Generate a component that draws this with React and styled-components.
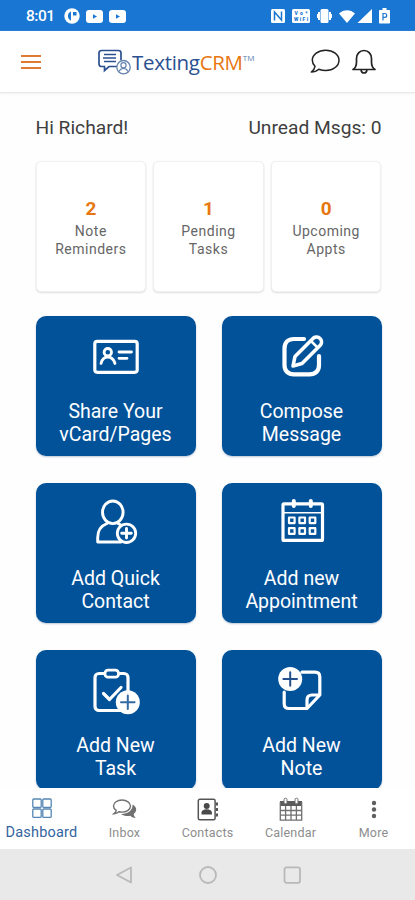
import styled, { createGlobalStyle } from "styled-components";

const COLORS = {
  status: "#1976d2",
  tile: "#02529a",
  orange: "#e8760f",
  navy: "#2b5090",
  grey: "#8d8d8d",
  dark: "#3f3f3f",
};

const GlobalStyle = createGlobalStyle`
  * {
    box-sizing: border-box;
  }
  body {
    margin: 0;
    background: #fff;
    font-family: Roboto, "Liberation Sans", sans-serif;
  }
  svg {
    display: block;
    flex-shrink: 0;
    overflow: visible;
  }
`;

const Screen = styled.div`
  width: 415px;
  height: 900px;
  display: flex;
  flex-direction: column;
  overflow: hidden;
  background: #fefefe;
`;

const StatusBar = styled.div`
  height: 31px;
  flex-shrink: 0;
  display: flex;
  align-items: center;
  justify-content: space-between;
  padding: 1px 25px 0 26px;
  background: ${COLORS.status};
  color: #fff;
`;

const StatusGroup = styled.div`
  display: flex;
  align-items: center;
  gap: ${(props) => props.$gap}px;
`;

const Time = styled.span`
  font-size: 15.5px;
  font-weight: 500;
  width: 31px;
  letter-spacing: -0.5px;
  margin-right: 1px;
`;

const Header = styled.header`
  height: 62px;
  flex-shrink: 0;
  display: flex;
  align-items: center;
  padding: 0 39px 0 21px;
  background: #fff;
  border-bottom: 1px solid #e9e9e9;
  box-shadow: 0 1px 2px #f1f1f1;
`;

const Menu = styled.div`
  width: 20px;
  display: flex;
  flex-direction: column;
  gap: 4px;
  span {
    height: 2px;
    background: #df7a35;
  }
`;

const Brand = styled.div`
  display: flex;
  align-items: center;
  flex: 1;
  margin-left: 56px;
`;

const BrandName = styled.div`
  font-family: "Open Sans", "Noto Sans", sans-serif;
  font-size: 20.5px;
  line-height: 28px;
  letter-spacing: -0.3px;
  white-space: nowrap;
  color: ${COLORS.navy};
  b {
    font-weight: 400;
    color: ${COLORS.orange};
  }
  sup {
    font-size: 8px;
    line-height: 0;
    vertical-align: 9px;
    letter-spacing: 0;
    color: #5f7fae;
  }
`;

const HeaderIcons = styled.div`
  display: flex;
  align-items: center;
  gap: 12px;
`;

const Content = styled.main`
  flex: 1;
  min-height: 0;
  overflow: hidden;
  padding: 23px 33.5px 0 35.5px;
`;

const Greeting = styled.div`
  display: flex;
  justify-content: space-between;
  font-size: 19.2px;
  line-height: 24px;
  color: ${COLORS.dark};
`;

const Stats = styled.div`
  display: grid;
  grid-template-columns: repeat(3, 1fr);
  gap: 7px;
  margin-top: 21px;
`;

const StatCard = styled.div`
  height: 131px;
  padding-top: 36px;
  text-align: center;
  background: #fff;
  border: 1px solid #f0f0f0;
  border-radius: 5px;
  box-shadow: 0 1px 2px #dedede;
`;

const StatNumber = styled.div`
  font-size: 19px;
  font-weight: 700;
  line-height: 22px;
  color: ${COLORS.orange};
`;

const StatLabel = styled.div`
  margin-top: 2px;
  font-size: 14px;
  line-height: 18px;
  letter-spacing: 0.5px;
  white-space: pre-line;
  color: #666;
`;

const Tiles = styled.div`
  display: grid;
  grid-template-columns: 160px 160px;
  justify-content: space-between;
  row-gap: 27px;
  margin-top: 24px;
`;

const Tile = styled.div`
  height: 140px;
  display: flex;
  flex-direction: column;
  align-items: center;
  padding-top: 16px;
  border-radius: 10px;
  background: ${COLORS.tile};
  color: #fff;
  box-shadow: 0 1px 2px #b9c6d6;
`;

const TileLabel = styled.div`
  margin-top: 18px;
  font-size: 19.5px;
  line-height: 23px;
  text-align: center;
  white-space: pre-line;
`;

const TabBar = styled.nav`
  height: 61px;
  flex-shrink: 0;
  display: grid;
  grid-template-columns: repeat(5, 83px);
  background: #fff;
`;

const Tab = styled.div`
  display: flex;
  flex-direction: column;
  align-items: center;
  padding-top: 9px;
  color: ${(props) => (props.$active ? "#34649f" : COLORS.grey)};
  font-size: ${(props) => (props.$active ? 14.5 : 12.5)}px;
  line-height: 18px;
  letter-spacing: 0.2px;
  svg {
    margin-bottom: 2px;
  }
`;

const SystemNav = styled.div`
  height: 51px;
  flex-shrink: 0;
  display: flex;
  align-items: center;
  justify-content: center;
  gap: 64px;
  background: #e9e9e9;
`;

const TileSvg = ({ children, width = 3.2 }) => (
  <svg
    width="50"
    height="50"
    viewBox="0 0 50 50"
    fill="none"
    stroke="#fff"
    strokeWidth={width}
    strokeLinecap="round"
    strokeLinejoin="round"
  >
    {children}
  </svg>
);

const VCardIcon = () => (
  <TileSvg>
    <rect x="3.8" y="9.3" width="42.4" height="31" rx="2.5" />
    <circle cx="16.8" cy="20.2" r="3.7" strokeWidth="2.8" />
    <path d="M10 31.5c1-4 3.5-6.5 6.8-6.5s6 2.5 7.2 6.5" strokeWidth="2.8" />
    <path d="M28 20h12.5M28 26.3h8" strokeWidth="2.8" />
  </TileSvg>
);

const ComposeIcon = () => (
  <TileSvg width={4.2}>
    <path d="M27 7H17C11 7 7.5 10.5 7.5 16.5V33c0 6 3.5 9.3 9.5 9.3h15.5c6 0 9.500-3.300 9.500-9.300V24" />
    <path
      d="M16 34l2-9.500L36.500 6a5 5 0 0 1 7 7L25 31.500z"
      fill={COLORS.tile}
      strokeWidth="3.600"
    />
    <path d="M34 9l6.500 6.500" strokeWidth="2.500" />
  </TileSvg>
);

const ContactIcon = () => (
  <TileSvg width={2.9}>
    <ellipse cx="21.8" cy="13.3" rx="10.3" ry="11.3" />
    <path d="M16 24.5C9.500 27 6.700 32 6.700 38.500V43H30M27 24.500l3 1.500" />
    <circle cx="35.5" cy="34.3" r="9.2" fill={COLORS.tile} />
    <path d="M35.500 29.500v9.600M30.700 34.300h9.600" />
  </TileSvg>
);

const AppointmentIcon = () => (
  <TileSvg>
    <rect x="6" y="4.8" width="39.5" height="36.6" rx="1" />
    <path d="M6 13.800h39.500" strokeWidth="1.600" />
    <path d="M16.800 2v5M33.800 2v5" strokeWidth="4" />
    {[21.3, 32].map((y) =>
      [14.8, 25.2, 35.5].map((x) => (
        <rect key={`${x}-${y}`} x={x - 2.8} y={y - 2.8} width="5.6" height="5.6" strokeWidth="2.2" />
      ))
    )}
  </TileSvg>
);

const TaskIcon = () => (
  <TileSvg>
    <rect x="4" y="7.5" width="33" height="37" rx="4" />
    <rect x="14" y="4.2" width="13.5" height="7" rx="3" fill={COLORS.tile} strokeWidth="2.8" />
    <path d="M12.500 27.500l6 6L30 21.500" />
    <circle cx="36.8" cy="36.3" r="12" fill="#fff" stroke="none" />
    <path d="M36.800 29.500v13.600M30 36.300h13.600" stroke="#356aa3" strokeWidth="2" />
  </TileSvg>
);

const NoteIcon = () => (
  <TileSvg>
    <path d="M25 6.200h13c3 0 4.800 1.800 4.800 4.800V29L30 42.500H12c-3 0-4.800-1.800-4.800-4.800V26" />
    <path d="M30 41v-7c0-3.500 1.500-5 5-5h6.500" />
    <circle cx="13.2" cy="13" r="12" fill="#fff" stroke="none" />
    <path d="M13.200 6.200v13.600M6.400 13h13.600" stroke="#234f8c" strokeWidth="2" />
  </TileSvg>
);

const LogoIcon = () => (
  <svg width="35" height="26" viewBox="0 0 35 26" fill="none" stroke={COLORS.navy} strokeWidth="1.7">
    <path d="M23 17.500H12L7.500 21.500v-4H4.500c-1.500 0-2.500-1-2.500-2.500V4c0-1.500 1-2.500 2.500-2.500h17C23 1.500 24 2.500 24 4v7" />
    <path d="M7 5.500h12M6 9h13M7 12.500h12" />
    <circle cx="26.5" cy="18.2" r="6.7" fill="#fff" stroke="#6483ae" strokeWidth="1.3" />
    <circle cx="26.5" cy="16.2" r="2.6" stroke="#6483ae" strokeWidth="1.2" />
    <path d="M22 22.500c.8-2 2.500-3 4.500-3s3.700 1 4.500 3" stroke="#6483ae" strokeWidth="1.2" />
  </svg>
);

const ChatIcon = () => (
  <svg width="30" height="25" viewBox="0 0 30 25" fill="none" stroke="#222" strokeWidth="1.5" strokeLinejoin="round">
    <path d="M15.700 1.200C8.300 1.200 2.300 5.600 2.300 11c0 2.500 1 4.600 2.700 6.300-.3 2.200-1.700 4.200-3.700 5.700 3 0 5.600-1 7.500-2.800 2.100.8 4.400 1.300 6.900 1.300 7.500 0 13.300-4.600 13.300-10.300S23.200 1.200 15.700 1.200z" />
  </svg>
);

const BellIcon = () => (
  <svg width="24" height="25" viewBox="0 0 24 25" fill="none" stroke="#222" strokeWidth="1.7" strokeLinejoin="round">
    <path d="M1 20.500c2.500-1.500 3.500-4 3.500-7.500V9.500c0-4.500 3-8 7.500-8s7.500 3.500 7.500 8V13c0 3.500 1 6 3.500 7.500z" />
    <path d="M9 21c.3 1.800 1.300 3 3 3s2.700-1.200 3-3" />
  </svg>
);

const YoutubeIcon = () => (
  <svg width="17" height="13" viewBox="0 0 17 13">
    <rect width="17" height="13" rx="3" fill="#fff" />
    <path d="M7 4.200v4.600l4-2.300z" fill={COLORS.status} />
  </svg>
);

const GridIcon = () => (
  <svg width="20" height="25" viewBox="0 0 20 25" fill="none" stroke="#5686b4" strokeWidth="1.3">
    <rect x=".8" y="2" width="8.4" height="8.4" rx="1" />
    <rect x="10.8" y="2" width="8.4" height="8.4" rx="1" />
    <rect x=".8" y="12" width="8.4" height="8.4" rx="1" />
    <rect x="10.8" y="12" width="8.4" height="8.4" rx="1" />
  </svg>
);

const InboxIcon = () => (
  <svg width="25" height="25" viewBox="0 0 25 25">
    <path
      d="M20.500 7.500c2.300 1.200 3.700 3 3.700 5 0 1.800-1 3.300-2.500 4.500.2 1.700 1 3 2.300 4-2.300 0-4.300-.8-5.700-2.200-3.500.6-6.800 0-9.300-1.800 6.500.2 12-3.500 11.500-9.500z"
      fill="#707070"
    />
    <path
      d="M10 3C5.300 3 1.500 5.700 1.500 9c0 1.800 1 3.300 2.700 4.400-.2 1.300-1 2.500-2.200 3.300 2 0 3.600-.6 4.900-1.900 1 .2 2 .3 3.100.3 4.700 0 8.500-2.700 8.500-6S14.700 3 10 3z"
      fill="#fff"
      stroke="#707070"
      strokeWidth="1.4"
    />
  </svg>
);

const ContactsIcon = () => (
  <svg width="22" height="25" viewBox="0 0 22 25">
    <rect x="1.3" y="2.3" width="16.8" height="20.5" rx="1.5" fill="none" stroke="#555" strokeWidth="1.5" />
    <circle cx="9.7" cy="9" r="3" fill="#4a4a4a" />
    <path d="M4.500 17.500v-2c0-2 2-3.300 5.200-3.300s5.200 1.300 5.200 3.300v2z" fill="#4a4a4a" />
    <path d="M20 5.500v3M20 11v3M20 16.500v3" stroke="#555" strokeWidth="2" />
  </svg>
);

const CalendarIcon = () => (
  <svg width="24" height="25" viewBox="0 0 24 25" fill="none" stroke="#707070">
    <path d="M1 4h22v5H1z" fill="#5b5b5b" stroke="none" />
    <path d="M1.300 5v18.200h21.400V5M6.600 9v14M12 9v14M17.400 9v14M1.300 13.500h21.400M1.300 18.200h21.400" strokeWidth="1.3" />
    <rect x="5" y="1.2" width="3" height="5.5" rx="1.5" fill="#fff" />
    <rect x="16" y="1.2" width="3" height="5.5" rx="1.5" fill="#fff" />
  </svg>
);

const MoreIcon = () => (
  <svg width="6" height="25" viewBox="0 0 6 25" fill="#5e5e5e">
    <circle cx="3" cy="6" r="2.2" />
    <circle cx="3" cy="12.5" r="2.2" />
    <circle cx="3" cy="19" r="2.2" />
  </svg>
);

const stats = [
  { value: 2, label: "Note\nReminders" },
  { value: 1, label: "Pending\nTasks" },
  { value: 0, label: "Upcoming\nAppts" },
];

const tiles = [
  { label: "Share Your\nvCard/Pages", Icon: VCardIcon },
  { label: "Compose\nMessage", Icon: ComposeIcon },
  { label: "Add Quick\nContact", Icon: ContactIcon },
  { label: "Add new\nAppointment", Icon: AppointmentIcon },
  { label: "Add New\nTask", Icon: TaskIcon },
  { label: "Add New\nNote", Icon: NoteIcon },
];

const tabs = [
  { label: "Dashboard", Icon: GridIcon, active: true },
  { label: "Inbox", Icon: InboxIcon },
  { label: "Contacts", Icon: ContactsIcon },
  { label: "Calendar", Icon: CalendarIcon },
  { label: "More", Icon: MoreIcon },
];

const Status = () => (
  <StatusBar>
    <StatusGroup $gap={6}>
      <Time>8:01</Time>
      <svg width="16" height="16" viewBox="0 0 16 16">
        <circle cx="8" cy="8" r="7.7" fill="#fff" />
        <path d="M7 3.500v9.200a5 5 0 0 1 0-9.200zM9 4h3.500v3.500H9z" fill={COLORS.status} />
      </svg>
      <YoutubeIcon />
      <YoutubeIcon />
    </StatusGroup>
    <StatusGroup $gap={7}>
      <svg width="14" height="14" viewBox="0 0 14 14">
        <rect width="14" height="14" rx="1.5" fill="#fff" />
        <path d="M3.500 11.500V3l7 8V2.500" fill="none" stroke={COLORS.status} strokeWidth="1.5" />
      </svg>
      <svg width="18" height="14" viewBox="0 0 18 14">
        <rect width="18" height="14" rx="1.5" fill="#fff" />
        <g fill={COLORS.status} fontSize="5" fontWeight="900" textAnchor="middle">
          <text x="9" y="5.8" textLength="13">
            Vo*
          </text>
          <text x="9" y="12.4" textLength="14">
            WiFi
          </text>
        </g>
      </svg>
      <svg width="15" height="14" viewBox="0 0 15 14">
        <rect x="3.5" width="8" height="14" rx="1.5" fill="#fff" />
        <path d="M2 3v8M13 3v8" stroke="#fff" strokeWidth="2" />
        <path d="M.5 5v4M14.500 5v4" stroke="#fff" />
      </svg>
      <svg width="33" height="15" viewBox="0 0 33 15" fill="#fff">
        <path d="M0 4.500C4.500 0 11.500 0 16 4.500L8 14z" />
        <path d="M33 0v14H18.500z" />
      </svg>
      <svg width="11" height="16" viewBox="0 0 11 16">
        <path d="M3.500 0h4v2H10c.6 0 1 .4 1 1v11.500c0 .6-.4 1-1 1H1c-.6 0-1-.4-1-1V3c0-.6.4-1 1-1h2.500z" fill="#fff" />
        <path d="M4 12.500v-7h1.800a1.900 1.900 0 0 1 0 3.800H4" fill="none" stroke={COLORS.status} strokeWidth="1.2" />
      </svg>
    </StatusGroup>
  </StatusBar>
);

const App = () => {
  return (
    <>
      <GlobalStyle />
      <Screen>
        <Status />
        <Header>
          <Menu>
            <span />
            <span />
            <span />
          </Menu>
          <Brand>
            <LogoIcon />
            <BrandName>
              Texting<b>CRM</b>
              <sup>TM</sup>
            </BrandName>
          </Brand>
          <HeaderIcons>
            <ChatIcon />
            <BellIcon />
          </HeaderIcons>
        </Header>
        <Content>
          <Greeting>
            <span>Hi Richard!</span>
            <span>Unread Msgs: 0</span>
          </Greeting>
          <Stats>
            {stats.map((stat) => (
              <StatCard key={stat.label}>
                <StatNumber>{stat.value}</StatNumber>
                <StatLabel>{stat.label}</StatLabel>
              </StatCard>
            ))}
          </Stats>
          <Tiles>
            {tiles.map(({ label, Icon }) => (
              <Tile key={label}>
                <Icon />
                <TileLabel>{label}</TileLabel>
              </Tile>
            ))}
          </Tiles>
        </Content>
        <TabBar>
          {tabs.map(({ label, Icon, active }) => (
            <Tab key={label} $active={active}>
              <Icon />
              {label}
            </Tab>
          ))}
        </TabBar>
        <SystemNav>
          <svg width="20" height="18" viewBox="0 0 20 18" fill="none" stroke="#b9b9b9" strokeWidth="1.8" strokeLinejoin="round">
            <path d="M17 1.500v15L3 9z" />
          </svg>
          <svg width="20" height="18" viewBox="0 0 20 18" fill="none" stroke="#b9b9b9" strokeWidth="1.8">
            <circle cx="10" cy="9" r="8" />
          </svg>
          <svg width="20" height="18" viewBox="0 0 20 18" fill="none" stroke="#b9b9b9" strokeWidth="1.8">
            <rect x="2.5" y="1.3" width="15.5" height="15.5" rx="2" />
          </svg>
        </SystemNav>
      </Screen>
    </>
  );
};

export default App;
